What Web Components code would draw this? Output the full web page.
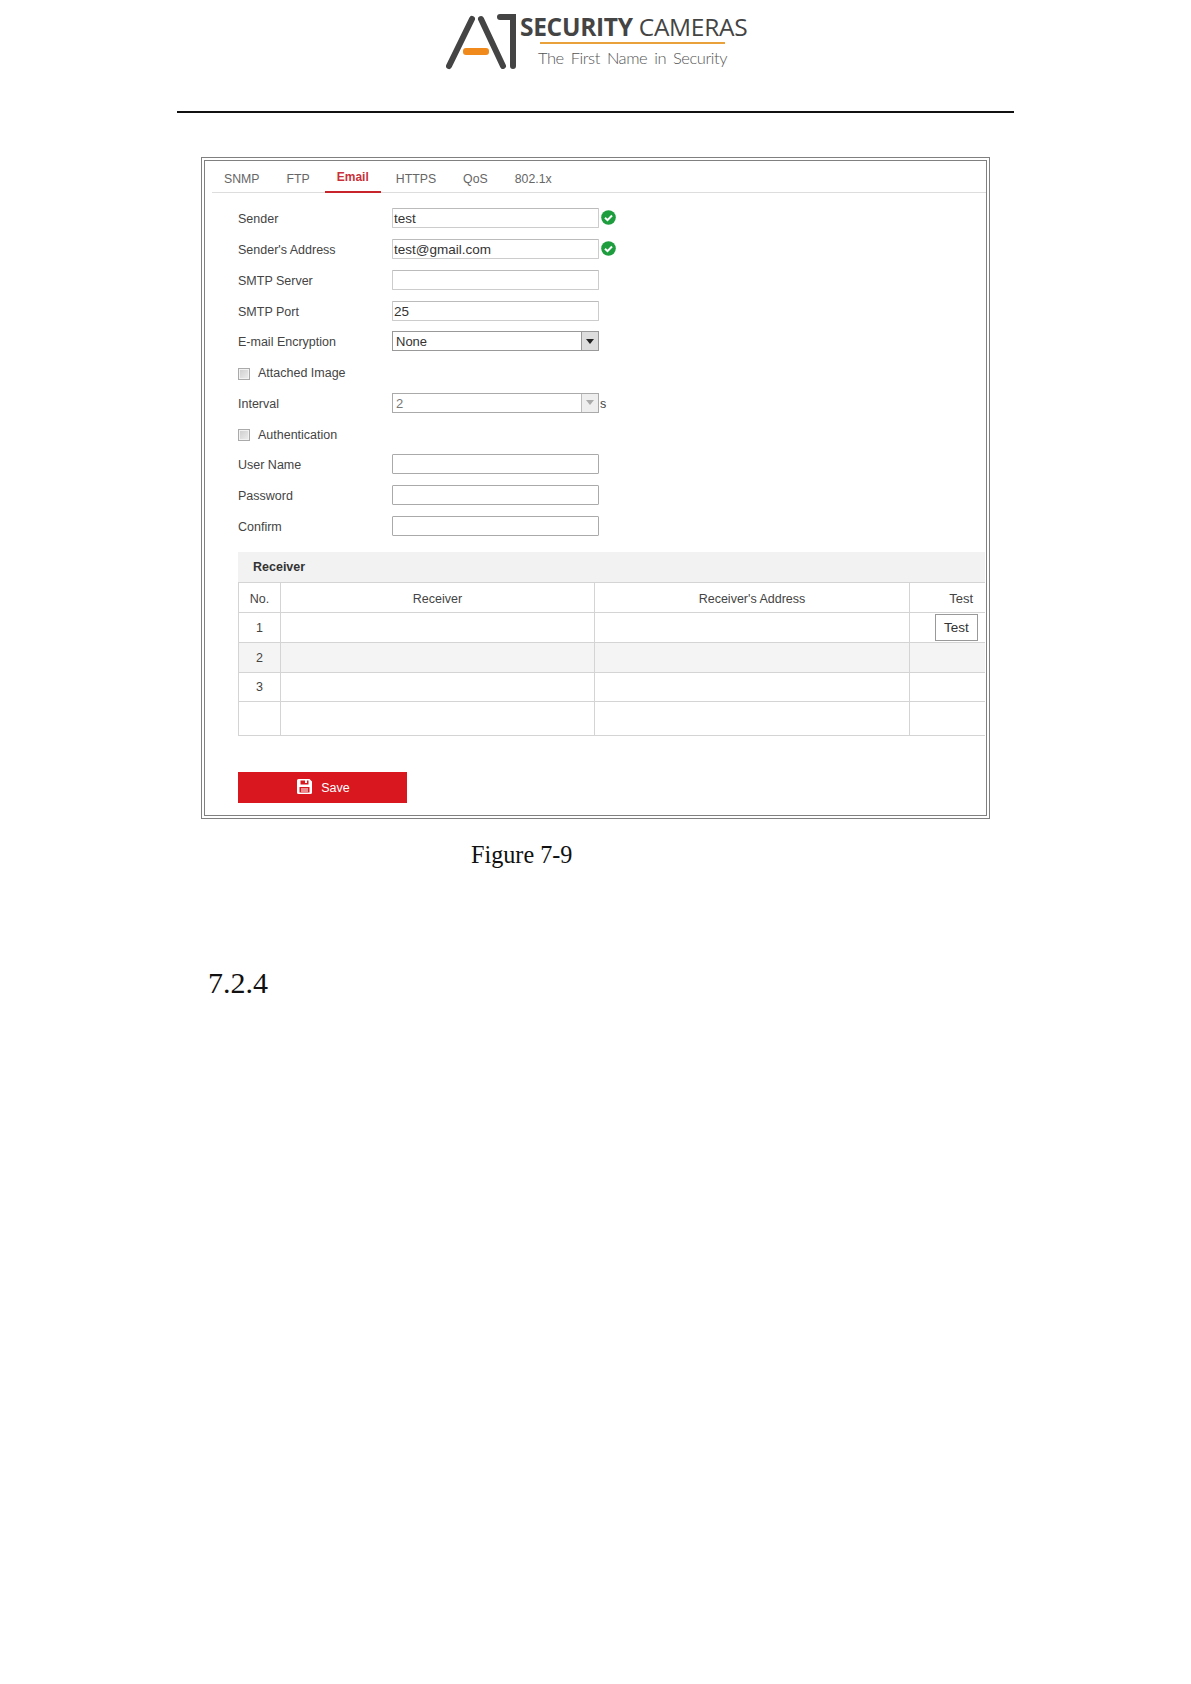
<!DOCTYPE html>
<html><head><meta charset="utf-8"><title>Email settings</title>
<style>
html,body{margin:0;background:#fff}
body{font-family:"Liberation Sans",Arial,sans-serif;width:1191px;height:1684px;overflow:hidden}
</style></head><body>
<template id="t-header">
<style>
:host{display:block;height:113px;box-sizing:border-box;border-bottom:2px solid #111;margin:0 177px;position:relative}
.logo{position:absolute;left:269px;top:12px;width:310px;height:62px}
svg{position:absolute;left:0;top:0}
.a{position:absolute;left:74px;top:0;font:700 24.500px/30px "Open Sans",sans-serif;color:#444;white-space:nowrap;letter-spacing:-.3px}
.a span{font-weight:400}
.l{position:absolute;left:94px;top:30px;width:185px;height:2px;background:#e9a23b}
.t{position:absolute;left:92px;top:35px;font:300 16.500px/22px Lato,sans-serif;color:#555;white-space:nowrap;letter-spacing:-.45px;word-spacing:3px}
</style>
<div class="logo">
<svg width="72" height="62" viewBox="0 0 72 62"><path d="M3 54 26 7M35 7 57 54" stroke="#444" stroke-width="6" stroke-linecap="round" fill="none"/><path d="M54 5H67V54" stroke="#444" stroke-width="6" stroke-linejoin="miter" stroke-linecap="round" fill="none"/><rect x="17" y="36" width="26" height="7" rx="3" fill="#f08a1d"/></svg>
<div class="a">SECURITY <span>CAMERAS</span></div><div class="l"></div><div class="t">The First Name in Security</div>
</div>
</template>
<template id="t-frame">
<style>:host{display:block;box-sizing:border-box;width:789px;height:662px;margin:44px 0 0 201px;border:4px double #808080;background:#fff;font:12.500px "Liberation Sans",sans-serif;color:#444}</style><slot></slot>
</template>
<template id="t-tabs">
<style>:host{display:flex;height:31px;margin-left:7px;border-bottom:1px solid #ddd;color:#666;font-size:12.300px}</style><slot></slot>
</template>
<template id="t-tab">
<style>:host{display:block;height:32px;box-sizing:border-box;padding:9px 12px 0;line-height:18px;white-space:nowrap;margin-right:3px}
:host([active]){color:#c8303a;font-weight:700;padding-top:7px;border-bottom:2px solid #c8242b;font-size:12px;}</style><slot></slot>
</template>
<template id="t-row">
<style>:host{display:flex;align-items:center;height:30.750px;padding-left:33px;white-space:nowrap}
.l{width:154px;flex:none;padding-top:2px}
::slotted(.s){margin-left:1px;padding-top:2px}</style><div class="l"><slot name="label"></slot></div><slot></slot>
</template>
<template id="t-input">
<style>:host{display:block;box-sizing:border-box;width:207px;height:20px;border:1px solid #ccc;border-top-color:#bbb;border-radius:1px;padding-left:1px;line-height:20px;color:#333;background:#fff;font-size:13.500px}
:host([dark]){border-color:#aaa}</style><slot></slot>
</template>
<template id="t-check">
<style>:host{display:block;margin:0 0 1px 2px;width:15px;height:15px}</style>
<svg width="15" height="15" viewBox="0 0 15 15"><circle cx="7.500" cy="7.500" r="7.300" fill="#1e9d3e"/><path d="M4 7.800 6.500 10.200 11 5.500" stroke="#fff" stroke-width="2" fill="none"/></svg>
</template>
<template id="t-select">
<style>:host{display:flex;box-sizing:border-box;width:207px;height:20px;border:1px solid #999;line-height:20px;padding-left:3px;color:#333;background:#fff;font-size:13px}
.v{flex:1}.b{width:16px;background:#ddd;border-left:1px solid #999;display:flex;align-items:center;justify-content:center}
.b i{border:4px solid transparent;border-top:5px solid #222;border-bottom:0}
:host([disabled]){color:#777;border-color:#aaa}
:host([disabled]) .b{background:#eee;border-left-color:#bbb}
:host([disabled]) .b i{border-top-color:#aaa}</style>
<div class="v"><slot></slot></div><div class="b"><i></i></div>
</template>
<template id="t-checkrow">
<style>:host{display:flex;align-items:center;height:30.750px;padding-left:33px;white-space:nowrap}
.c{width:12px;height:12px;box-sizing:border-box;margin:3px 8px 0 0;border:1px solid #aaa;background:linear-gradient(135deg,#ccc,#eee);box-shadow:inset 0 0 0 1px #f2f2f2}
span{padding-top:2px}
</style><div class="c"></div><span><slot></slot></span>
</template>
<template id="t-receiver">
<style>:host{display:block;margin:0 1px 0 33px;padding-top:11px}
.h{height:30px;background:#f2f2f2;padding-left:15px;line-height:31px;font-weight:700;color:#333;font-size:12.500px;border-bottom:1px solid #d4d4d4}
table{border-collapse:separate;border-spacing:0;table-layout:fixed;width:747px;color:#444}
col:nth-child(1){width:43px}col:nth-child(2){width:314px}col:nth-child(3){width:315px}col:nth-child(4){width:75px}
td,th{font-weight:400;height:30px;padding:0;border:0 solid #d4d4d4;border-width:0 1px 1px 0;text-align:center;box-sizing:border-box}
td:first-child,th:first-child{border-left-width:1px}
td:last-child,th:last-child{border-right:0}
th{padding-top:2px}
tr.g td{background:#f4f4f4}
tr.r3 td{height:29px}
tr.last td{height:34px}
th.t{text-align:right;padding-right:12px;padding-top:1px;font-size:13px}
td.b{position:relative}
.btn{position:absolute;right:7px;top:1px;width:43px;height:27px;box-sizing:border-box;border:1px solid #999;background:#fff;line-height:26px;color:#333;font-size:13.500px}
</style>
<div class="h">Receiver</div>
<table><colgroup><col><col><col><col></colgroup>
<tr><th>No.</th><th>Receiver</th><th>Receiver's Address</th><th class="t">Test</th></tr>
<tr><td>1</td><td></td><td></td><td class="b"><div class="btn">Test</div></td></tr>
<tr class="g"><td>2</td><td></td><td></td><td></td></tr>
<tr class="r3"><td>3</td><td></td><td></td><td></td></tr>
<tr class="last"><td></td><td></td><td></td><td></td></tr>
</table>
</template>
<template id="t-save">
<style>:host{display:flex;align-items:center;justify-content:center;gap:9px;width:169px;height:31px;margin:36px 0 0 33px;padding-left:2px;box-sizing:border-box;background:#d9171f;color:#fff;font-size:12.500px}
svg{display:block;margin-bottom:2px}</style>
<svg width="15" height="15" viewBox="0 0 15 15"><path fill="#fff" fill-rule="evenodd" d="M1.500 0H12.500L15 2.500V13.500A1.500 1.500 0 0 1 13.500 15H1.500A1.500 1.500 0 0 1 0 13.500V1.500A1.500 1.500 0 0 1 1.500 0ZM3.500 1.500V5.500H11.500V1.500H10V4H8V1.500ZM2.500 8V13.500H12.500V8ZM4 9.500H11V10.500H4ZM4 11.500H11V12.500H4Z"/></svg><slot></slot>
</template>
<template id="t-caption">
<style>:host{display:block;font:24.200px/28px "Liberation Serif",serif;color:#111;margin:22px 0 0 471px}</style><slot></slot>
</template>
<template id="t-section">
<style>:host{display:block;font:30px/38px "Liberation Serif",serif;color:#111;margin:95px 0 0 208px}</style><slot></slot>
</template>

<a1-header></a1-header>
<mail-frame>
  <tab-bar><tab-item>SNMP</tab-item><tab-item>FTP</tab-item><tab-item active>Email</tab-item><tab-item>HTTPS</tab-item><tab-item>QoS</tab-item><tab-item>802.1x</tab-item></tab-bar>
  <div style="height:10px"></div>
  <form-row><span slot="label">Sender</span><text-box>test</text-box><ok-mark></ok-mark></form-row>
  <form-row><span slot="label">Sender's Address</span><text-box>test@gmail.com</text-box><ok-mark></ok-mark></form-row>
  <form-row><span slot="label">SMTP Server</span><text-box></text-box></form-row>
  <form-row><span slot="label">SMTP Port</span><text-box>25</text-box></form-row>
  <form-row><span slot="label">E-mail Encryption</span><select-box>None</select-box></form-row>
  <check-row>Attached Image</check-row>
  <form-row><span slot="label">Interval</span><select-box disabled>2</select-box><span class="s">s</span></form-row>
  <check-row>Authentication</check-row>
  <form-row><span slot="label">User Name</span><text-box dark></text-box></form-row>
  <form-row><span slot="label">Password</span><text-box dark></text-box></form-row>
  <form-row><span slot="label">Confirm</span><text-box dark></text-box></form-row>
  <receiver-table></receiver-table>
  <save-button>Save</save-button>
</mail-frame>
<fig-caption>Figure 7-9</fig-caption>
<section-num>7.2.4</section-num>
<script>
const map={'a1-header':'t-header','mail-frame':'t-frame','tab-bar':'t-tabs','tab-item':'t-tab','form-row':'t-row','text-box':'t-input','ok-mark':'t-check','select-box':'t-select','check-row':'t-checkrow','receiver-table':'t-receiver','save-button':'t-save','fig-caption':'t-caption','section-num':'t-section'};
for(const [n,id] of Object.entries(map)){
  customElements.define(n,class extends HTMLElement{constructor(){super();this.attachShadow({mode:'open'}).appendChild(document.getElementById(id).content.cloneNode(true));}});
}
</script>
</body></html>
